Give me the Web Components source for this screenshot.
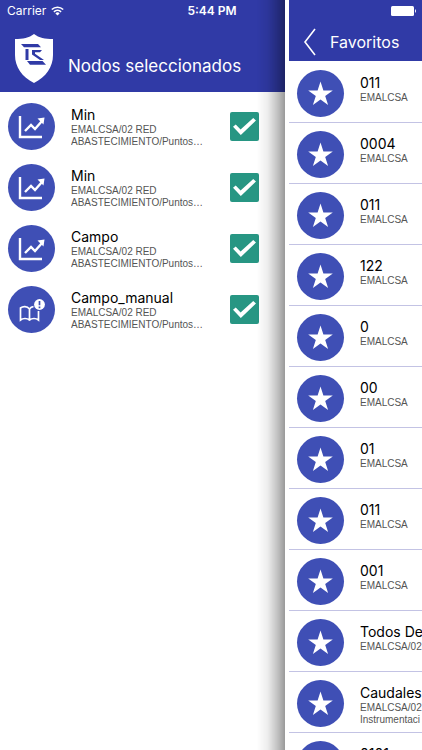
<!DOCTYPE html>
<html lang="es">
<head>
<meta charset="utf-8">
<meta name="viewport" content="width=device-width, initial-scale=1">
<title>Nodos seleccionados</title>
<style>
  html, body { margin: 0; height: 100%; }
  body {
    --bar: #303aa6;
    --accent: #3f4fb5;
    --check: #279683;
    --muted: #555;
    font-family: Inter, "Liberation Sans", sans-serif;
    color: #000;
    background: #fff;
    overflow: hidden;
  }
</style>
</head>
<body>
<app-shell></app-shell>
<script>
const define = (name, html, setup) => {
  const template = document.createElement('template');
  template.innerHTML = html;
  customElements.define(name, class extends HTMLElement {
    connectedCallback() {
      if (this.shadowRoot) return;
      this.attachShadow({ mode: 'open' }).append(template.content.cloneNode(true));
      if (setup) setup(this, this.shadowRoot);
    }
  });
};

const icons = {
  chart: '<path d="M12 13v21h22" fill="none" stroke="#fff" stroke-width="2.400"/><path d="M17 28l6-6 4 4 7-8" fill="none" stroke="#fff" stroke-width="2.400"/><path d="M29.500 15.500l7-1-1 7z" fill="#fff"/>',
  book: '<path d="M21.500 23c-2.500-3-6.500-3-9-1v12c2.500-2 6.500-2 9 0 2.500-2 6.500-2 9 0V25M21.500 23v11M21.500 23c1-1.500 2.500-2.300 4-2.300" fill="none" stroke="#fff" stroke-width="1.700"/><circle cx="31.500" cy="18.500" r="5.400" fill="#fff"/><path d="M31.500 15v4.200M31.500 20.500v1.700" stroke="#3f4fb5" stroke-width="1.700"/>',
  star: '<path d="M23.500 11.500l2.900 9h9.400l-7.600 5.500 2.900 9-7.600-5.600-7.600 5.600 2.900-9-7.600-5.500h9.400z" fill="#fff"/>'
};

define('round-icon', `
  <style>
    :host { display: block; flex: none; width: 47px; height: 47px; border-radius: 50%; background: var(--accent); }
    svg { display: block; }
  </style>
  <svg width="47" height="47" viewBox="0 0 47 47" aria-hidden="true"></svg>`,
  (host, root) => { root.querySelector('svg').innerHTML = icons[host.getAttribute('name')]; });

define('status-bar', `
  <style>
    :host { display: grid; grid-template-columns: 1fr auto 1fr; align-items: center; height: 22px; padding: 0 5px 0 7px; color: #fff; font-size: 12px; line-height: 20px; }
    .carrier { display: flex; align-items: center; gap: 5px; }
    b { font-weight: 600; }
    .battery { justify-self: end; }
  </style>
  <span class="carrier"><span>Carrier</span>
    <svg width="13" height="10" viewBox="0 0 13 10" aria-hidden="true"><g fill="none" stroke="#fff" stroke-width="1.600"><path d="M.8 3.500a8.200 8.200 0 0 1 11.400 0"/><path d="M2.900 5.800a5.200 5.200 0 0 1 7.200 0"/></g><path d="M4.400 7.400a3 3 0 0 1 4.200 0L6.500 9.600z" fill="#fff"/></svg>
  </span>
  <b>5:44 PM</b>
  <svg class="battery" width="26" height="10" viewBox="0 0 26 10" aria-hidden="true"><rect width="23" height="10" rx="1.500" fill="#fff"/><path d="M24 3q2 2 0 4z" fill="#fff"/></svg>`);

define('node-header', `
  <style>
    :host { display: flex; align-items: center; gap: 14px; height: 92px; box-sizing: border-box; padding: 33px 12px 8px; background: var(--bar); color: #fff; }
    svg { flex: none; }
    h1 { margin: 14px 0 0; font-size: 17px; line-height: 24px; font-weight: 400; white-space: nowrap; }
  </style>
  <svg width="42" height="51" viewBox="0 0 42 51" aria-hidden="true">
    <path d="M22 1c5 4 11 5 19 5v16c0 12-7 22-19 28C10 44 3 34 3 22V6c8 0 14-1 19-5z" fill="#fff"/>
    <g fill="#303aa6"><path d="M9 11h17l3 3.200H12z"/><path d="M13.500 16h3v11h-3z"/><path d="M15 28h15.500l3.500 3.800H18z"/><path d="M20 17h10l-2 2.200h-5v1.500l9 6.300h-4l-8-5.600z"/></g>
  </svg>
  <h1><slot></slot></h1>`);

define('node-row', `
  <style>
    :host { display: block; }
    label { display: flex; align-items: center; height: 61px; padding-right: 26px; }
    .text { flex: 1; min-width: 0; margin: 0 24px 0 16px; }
    .title { display: block; font-size: 14px; line-height: 18px; }
    .path { display: -webkit-box; -webkit-box-orient: vertical; -webkit-line-clamp: 2; overflow: hidden; max-width: 136px; font: 10px/12px "Liberation Sans", sans-serif; color: var(--muted); }
    input { appearance: none; flex: none; display: grid; place-items: center; width: 29px; height: 29px; margin: 0; border-radius: 2px; background: #ccc; }
    input:checked { background: var(--check); }
    input:checked::before { content: ""; width: 23px; height: 17px; background: #fff; clip-path: polygon(0 52%, 12% 38%, 33% 68%, 88% 0, 100% 14%, 34% 100%); }
  </style>
  <label>
    <round-icon></round-icon>
    <span class="text"><span class="title"><slot></slot></span><span class="path"><slot name="path"></slot></span></span>
    <input type="checkbox" checked>
  </label>`,
  (host, root) => {
    const icon = document.createElement('round-icon');
    icon.setAttribute('name', host.getAttribute('icon'));
    root.querySelector('round-icon').replaceWith(icon);
  });

define('drawer-header', `
  <style>
    :host { display: flex; align-items: center; gap: 14px; height: 61px; box-sizing: border-box; padding: 22px 0 0 14px; background: var(--bar); color: #fff; }
    button { flex: none; border: 0; padding: 0; background: none; }
    svg { display: block; }
    h2 { margin: 0; font-size: 16px; line-height: 24px; font-weight: 400; white-space: nowrap; }
  </style>
  <button type="button" aria-label="Volver"><svg width="13" height="28" viewBox="0 0 13 28"><path d="M12 1L2 14l10 13" fill="none" stroke="#fff" stroke-width="1.600"/></svg></button>
  <h2><slot></slot></h2>`);

define('favorite-row', `
  <style>
    :host { display: block; border-bottom: 1px solid #c3c3e4; }
    a { display: flex; gap: 16px; height: 60px; box-sizing: border-box; padding: 8px 0 0 8px; color: inherit; text-decoration: none; white-space: nowrap; overflow: hidden; }
    .title { display: block; margin-top: 4px; font-size: 14px; line-height: 18px; }
    .path { display: block; white-space: pre-line; width: max-content; font: 10px/12px "Liberation Sans", sans-serif; color: var(--muted); }
  </style>
  <a href="#"><round-icon name="star"></round-icon><span><span class="title"><slot></slot></span><span class="path"><slot name="path"></slot></span></span></a>`);

define('app-shell', `
  <style>
    :host { display: grid; grid-template-columns: minmax(0, 1fr) 137px; height: 100vh; position: relative; overflow: hidden; }
    status-bar { position: absolute; inset: 0 0 auto; z-index: 2; }
    main { min-width: 0; }
    .nodes { padding: 4px 0 0 8px; }
    .favorites { padding-top: 1px; }
    aside { position: relative; min-width: 0; height: 100%; box-sizing: border-box; padding-left: 4px; background: #fff; }
    aside::before { content: ""; position: absolute; inset: 0 100% 0 auto; width: 28px; background: linear-gradient(to left, rgba(0,0,0,.4), rgba(0,0,0,.25) 25%, rgba(0,0,0,.07) 62%, transparent); mask-image: linear-gradient(to top, transparent, #000 40px); pointer-events: none; }
    .clip { height: 100%; overflow: hidden; }
  </style>
  <status-bar></status-bar>
  <main><node-header>Nodos seleccionados</node-header><div class="nodes"></div></main>
  <aside><div class="clip"><drawer-header>Favoritos</drawer-header><div class="favorites"></div></div></aside>`,
  (host, root) => {
    const row = (tag, title, path, icon) => {
      const el = document.createElement(tag);
      if (icon) el.setAttribute('icon', icon);
      const sub = document.createElement('span');
      sub.slot = 'path';
      sub.textContent = path;
      el.append(title, sub);
      return el;
    };
    const path = 'EMALCSA/02 RED ABASTECIMIENTO/Puntos…';
    root.querySelector('.nodes').append(...[['Min', 'chart'], ['Min', 'chart'], ['Campo', 'chart'], ['Campo_manual', 'book']]
      .map(([title, icon]) => row('node-row', title, path, icon)));
    root.querySelector('.favorites').append(
      ...['011', '0004', '011', '122', '0', '00', '01', '011', '001'].map(title => row('favorite-row', title, 'EMALCSA')),
      row('favorite-row', 'Todos De', 'EMALCSA/02'),
      row('favorite-row', 'Caudales', 'EMALCSA/02\nInstrumentaci'),
      row('favorite-row', '0101', 'EMALCSA'));
  });
</script>
</body>
</html>
